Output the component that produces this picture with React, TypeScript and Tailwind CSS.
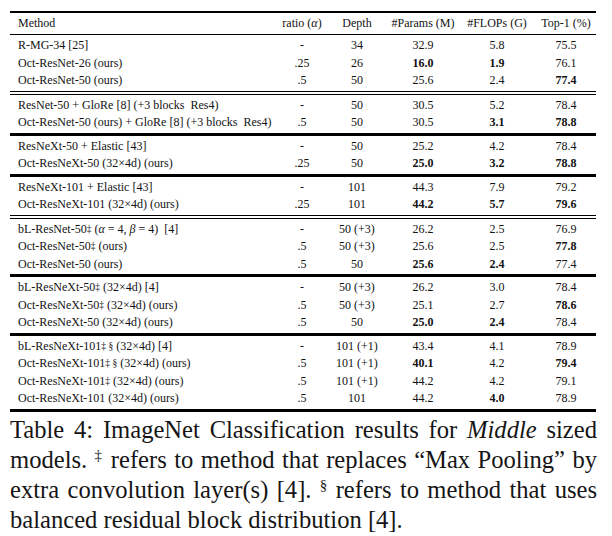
import type { ReactNode } from 'react';

type Row = {
  method: ReactNode;
  ratio: string;
  depth: string;
  params: string;
  flops: string;
  top1: string;
  bold?: ('params' | 'flops' | 'top1')[];
};

type Group = { rows: Row[]; after: 'double' | 'thick' | 'bottom' };

const Sup = ({ children }: { children: ReactNode }) => (
  <sup className="text-[9.5px] leading-none relative top-[-1px]">{children}</sup>
);

const groups: Group[] = [
  {
    after: 'double',
    rows: [
      { method: 'R-MG-34 [25]', ratio: '-', depth: '34', params: '32.9', flops: '5.8', top1: '75.5' },
      { method: 'Oct-ResNet-26 (ours)', ratio: '.25', depth: '26', params: '16.0', flops: '1.9', top1: '76.1', bold: ['params', 'flops'] },
      { method: 'Oct-ResNet-50 (ours)', ratio: '.5', depth: '50', params: '25.6', flops: '2.4', top1: '77.4', bold: ['top1'] },
    ],
  },
  {
    after: 'thick',
    rows: [
      { method: <span className="whitespace-pre">ResNet-50 + GloRe [8] (+3 blocks  Res4)</span>, ratio: '-', depth: '50', params: '30.5', flops: '5.2', top1: '78.4' },
      { method: <span className="whitespace-pre">Oct-ResNet-50 (ours) + GloRe [8] (+3 blocks  Res4)</span>, ratio: '.5', depth: '50', params: '30.5', flops: '3.1', top1: '78.8', bold: ['flops', 'top1'] },
    ],
  },
  {
    after: 'thick',
    rows: [
      { method: 'ResNeXt-50 + Elastic [43]', ratio: '-', depth: '50', params: '25.2', flops: '4.2', top1: '78.4' },
      { method: 'Oct-ResNeXt-50 (32×4d) (ours)', ratio: '.25', depth: '50', params: '25.0', flops: '3.2', top1: '78.8', bold: ['params', 'flops', 'top1'] },
    ],
  },
  {
    after: 'double',
    rows: [
      { method: 'ResNeXt-101 + Elastic [43]', ratio: '-', depth: '101', params: '44.3', flops: '7.9', top1: '79.2' },
      { method: 'Oct-ResNeXt-101 (32×4d) (ours)', ratio: '.25', depth: '101', params: '44.2', flops: '5.7', top1: '79.6', bold: ['params', 'flops', 'top1'] },
    ],
  },
  {
    after: 'thick',
    rows: [
      {
        method: (
          <span className="whitespace-pre">
            bL-ResNet-50<Sup>‡</Sup> (<i>α</i> = 4, <i>β</i> = 4)  [4]
          </span>
        ),
        ratio: '-', depth: '50 (+3)', params: '26.2', flops: '2.5', top1: '76.9',
      },
      { method: <>Oct-ResNet-50<Sup>‡</Sup> (ours)</>, ratio: '.5', depth: '50 (+3)', params: '25.6', flops: '2.5', top1: '77.8', bold: ['top1'] },
      { method: 'Oct-ResNet-50 (ours)', ratio: '.5', depth: '50', params: '25.6', flops: '2.4', top1: '77.4', bold: ['params', 'flops'] },
    ],
  },
  {
    after: 'thick',
    rows: [
      { method: <>bL-ResNeXt-50<Sup>‡</Sup> (32×4d) [4]</>, ratio: '-', depth: '50 (+3)', params: '26.2', flops: '3.0', top1: '78.4' },
      { method: <>Oct-ResNeXt-50<Sup>‡</Sup> (32×4d) (ours)</>, ratio: '.5', depth: '50 (+3)', params: '25.1', flops: '2.7', top1: '78.6', bold: ['top1'] },
      { method: 'Oct-ResNeXt-50 (32×4d) (ours)', ratio: '.5', depth: '50', params: '25.0', flops: '2.4', top1: '78.4', bold: ['params', 'flops'] },
    ],
  },
  {
    after: 'bottom',
    rows: [
      { method: <>bL-ResNeXt-101<Sup>‡ §</Sup> (32×4d) [4]</>, ratio: '-', depth: '101 (+1)', params: '43.4', flops: '4.1', top1: '78.9' },
      { method: <>Oct-ResNeXt-101<Sup>‡ §</Sup> (32×4d) (ours)</>, ratio: '.5', depth: '101 (+1)', params: '40.1', flops: '4.2', top1: '79.4', bold: ['params', 'top1'] },
      { method: <>Oct-ResNeXt-101<Sup>‡</Sup> (32×4d) (ours)</>, ratio: '.5', depth: '101 (+1)', params: '44.2', flops: '4.2', top1: '79.1' },
      { method: 'Oct-ResNeXt-101 (32×4d) (ours)', ratio: '.5', depth: '101', params: '44.2', flops: '4.0', top1: '78.9', bold: ['flops'] },
    ],
  },
];

const cols = 'grid grid-cols-[268px_48px_62px_70px_78px_60px] items-center';

function Separator({ kind }: { kind: Group['after'] }) {
  if (kind === 'double')
    return (
      <div className="flex flex-col gap-[2px]">
        <div className="h-px bg-black" />
        <div className="h-px bg-black" />
      </div>
    );
  return <div className="h-[3px] bg-black" />;
}

function DataRow({ row }: { row: Row }) {
  const b = (k: 'params' | 'flops' | 'top1') => (row.bold?.includes(k) ? 'font-bold' : '');
  return (
    <div className={`${cols} h-[17.5px]`}>
      <div className="pl-[8px] whitespace-nowrap">{row.method}</div>
      <div className="text-center">{row.ratio}</div>
      <div className="text-center">{row.depth}</div>
      <div className={`text-center ${b('params')}`}>{row.params}</div>
      <div className={`text-center ${b('flops')}`}>{row.flops}</div>
      <div className={`text-center ${b('top1')}`}>{row.top1}</div>
    </div>
  );
}

export default function App() {
  return (
    <div className="w-[612px] h-[536px] overflow-hidden bg-white px-[10px] pt-[11px] font-[family-name:Liberation_Serif,serif] text-[#121212]">
      <div className="w-[586px] text-[12px] leading-[17.5px]">
        <div className="h-[2px] bg-black" />
        <div className={`${cols} h-[21px]`}>
          <div className="pl-[8px]">Method</div>
          <div className="text-center whitespace-nowrap">
            ratio (<i>α</i>)
          </div>
          <div className="text-center">Depth</div>
          <div className="text-center whitespace-nowrap">#Params (M)</div>
          <div className="text-center whitespace-nowrap">#FLOPs (G)</div>
          <div className="text-center whitespace-nowrap">Top-1 (%)</div>
        </div>
        <div className="h-px bg-black" />
        {groups.map((g, i) => (
          <div key={i}>
            <div className="pt-[2px] pb-[1px]">
              {g.rows.map((r, j) => (
                <DataRow key={j} row={r} />
              ))}
            </div>
            <Separator kind={g.after} />
          </div>
        ))}
      </div>

      <div className="mt-[3px] w-[587px] text-[24.6px] leading-[30px] text-[#151515]">
        <p className="text-justify [text-align-last:justify]">
          Table 4: ImageNet Classification results for <i>Middle</i> sized
        </p>
        <p className="text-justify [text-align-last:justify]">
          models. <sup className="text-[15px]">‡</sup> refers to method that replaces “Max Pooling” by
        </p>
        <p className="text-justify [text-align-last:justify]">
          extra convolution layer(s) [4]. <sup className="text-[15px]">§</sup> refers to method that uses
        </p>
        <p>balanced residual block distribution [4].</p>
      </div>
    </div>
  );
}
